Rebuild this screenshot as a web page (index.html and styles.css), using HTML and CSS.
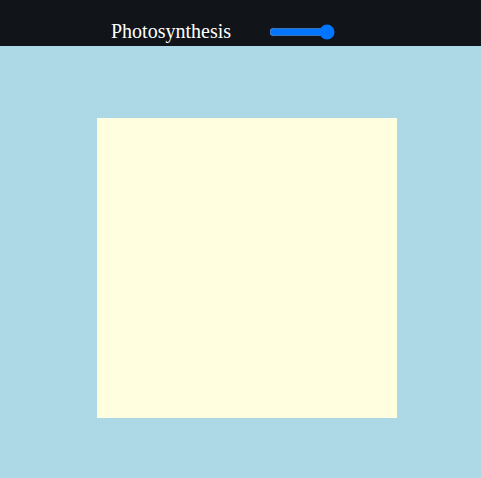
FILE: index.html
```html
<!DOCTYPE html>
<html>
<head>
<meta charset="utf-8">
<link rel="stylesheet" href="styles.css">
</head>
<body>
<header class="bar">
  <span class="title">Photosynthesis</span>
  <input class="slider" type="range" min="0" max="100" value="100">
</header>
<main class="stage">
  <div class="leaf"></div>
</main>
</body>
</html>
```
FILE: styles.css
```css
html, body {
  margin: 0;
  padding: 0;
  height: 100%;
  background: #add8e6;
  overflow: hidden;
}
.bar {
  height: 46px;
  background: #111418;
  display: flex;
  align-items: center;
  padding-left: 111px;
  padding-top: 17px;
  box-sizing: border-box;
  gap: 38px;
}
.title {
  font-family: "Liberation Serif", "Times New Roman", serif;
  font-size: 20px;
  color: #ffffff;
}
.slider {
  width: 66px;
  margin: 0;
  accent-color: #0075ff;
}
.stage {
  padding-top: 72px;
  padding-left: 97px;
}
.leaf {
  width: 300px;
  height: 300px;
  background: #ffffe0;
}
```
